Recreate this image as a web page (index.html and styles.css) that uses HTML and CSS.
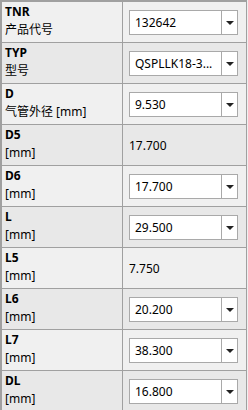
FILE: index.html
```html
<!DOCTYPE html>
<html lang="zh">
<head>
    <meta charset="UTF-8">
    <title>Properties</title>
    <link rel="stylesheet" href="styles.css">
</head>
<body>
    <div class="grid">
        <div class="row">
            <div class="label"><b>TNR</b><span>产品代号</span></div>
            <div class="value"><div class="combo"><span class="text">132642</span><span class="arrow"></span></div></div>
        </div>
        <div class="row alt">
            <div class="label"><b>TYP</b><span>型号</span></div>
            <div class="value"><div class="combo"><span class="text">QSPLLK18-3...</span><span class="arrow"></span></div></div>
        </div>
        <div class="row">
            <div class="label"><b>D</b><span>气管外径 [mm]</span></div>
            <div class="value"><div class="combo"><span class="text">9.530</span><span class="arrow"></span></div></div>
        </div>
        <div class="row alt">
            <div class="label"><b>D5</b><span>[mm]</span></div>
            <div class="value"><span class="static">17.700</span></div>
        </div>
        <div class="row">
            <div class="label"><b>D6</b><span>[mm]</span></div>
            <div class="value"><div class="combo"><span class="text">17.700</span><span class="arrow"></span></div></div>
        </div>
        <div class="row alt">
            <div class="label"><b>L</b><span>[mm]</span></div>
            <div class="value"><div class="combo"><span class="text">29.500</span><span class="arrow"></span></div></div>
        </div>
        <div class="row">
            <div class="label"><b>L5</b><span>[mm]</span></div>
            <div class="value"><span class="static">7.750</span></div>
        </div>
        <div class="row alt">
            <div class="label"><b>L6</b><span>[mm]</span></div>
            <div class="value"><div class="combo"><span class="text">20.200</span><span class="arrow"></span></div></div>
        </div>
        <div class="row">
            <div class="label"><b>L7</b><span>[mm]</span></div>
            <div class="value"><div class="combo"><span class="text">38.300</span><span class="arrow"></span></div></div>
        </div>
        <div class="row alt">
            <div class="label"><b>DL</b><span>[mm]</span></div>
            <div class="value"><div class="combo"><span class="text">16.800</span><span class="arrow"></span></div></div>
        </div>
    </div>
</body>
</html>
```

FILE: styles.css
```css
body {
    margin: 0;
    background: #f0f0f0;
    font-family: "Noto Sans", "Noto Sans CJK SC", sans-serif;
    font-size: 12px;
    color: #000;
    overflow: hidden;
}

.grid {
    width: 244px;
    border-top: 2px solid #a0a0a0;
    border-left: 2px solid #a0a0a0;
    border-right: 1px solid #a0a0a0;
}

.row {
    display: grid;
    grid-template-columns: 121px 121px;
    height: 40px;
    border-bottom: 1px solid #a0a0a0;
    background: #f0f0f0;
}

.row.alt {
    background: #e8e8e8;
}

.label {
    border-right: 1px solid #a0a0a0;
    padding: 1px 0 0 3px;
    display: flex;
    flex-direction: column;
    line-height: 18px;
}

.label b {
    font-weight: 700;
}

.value {
    display: flex;
    align-items: center;
    padding-left: 6px;
}

.static {
    padding-left: 0;
}

.combo {
    display: flex;
    width: 107px;
    height: 23px;
    border: 1px solid #a9a9a9;
    background: #fff;
}

.combo .text {
    flex: 1;
    padding-left: 5px;
    line-height: 23px;
    white-space: nowrap;
    overflow: hidden;
}

.combo .arrow {
    width: 15px;
    border-left: 1px solid #a9a9a9;
    position: relative;
}

.combo .arrow::after {
    content: "";
    position: absolute;
    left: 4px;
    top: 10px;
    border-left: 4px solid transparent;
    border-right: 4px solid transparent;
    border-top: 4px solid #222;
}
```
